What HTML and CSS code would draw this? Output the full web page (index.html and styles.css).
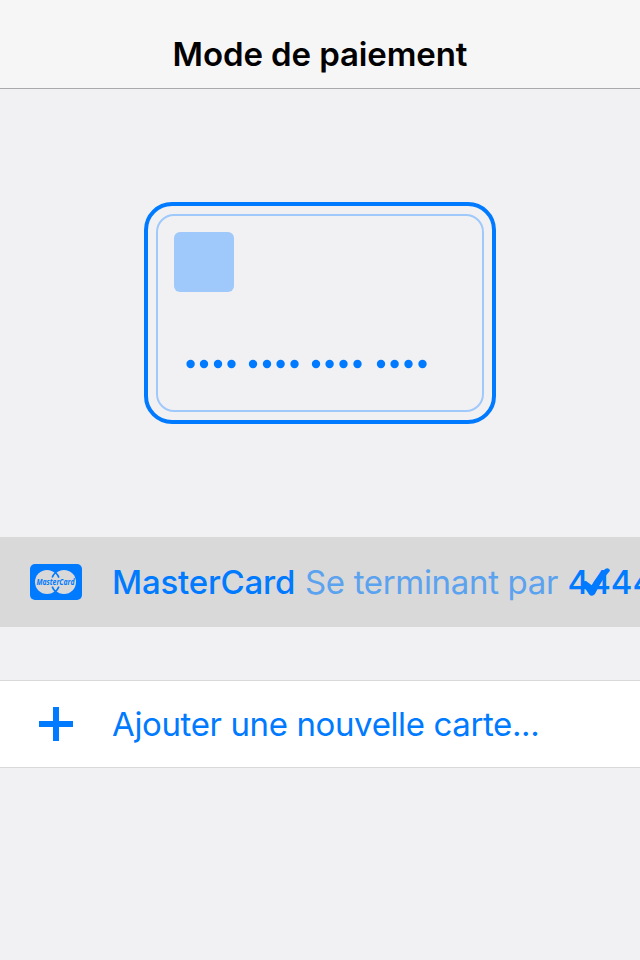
FILE: index.html
```html
<!DOCTYPE html>
<html lang="fr">
<head>
<meta charset="utf-8">
<title>Mode de paiement</title>
<link rel="stylesheet" href="styles.css">
</head>
<body>
<header class="navbar"><h1 class="title">Mode de paiement</h1></header>
<main>
  <section class="hero">
    <svg class="card" width="352" height="222" viewBox="0 0 352 222" aria-hidden="true">
      <rect class="card-outer" x="2" y="2" width="348" height="218" rx="26"/>
      <rect class="card-inner" x="13" y="13" width="326" height="196" rx="17"/>
      <rect class="chip" x="30" y="30" width="60" height="60" rx="6"/>
      <g class="dots">
        <circle cx="46.6" cy="162" r="4.2"/><circle cx="60" cy="162" r="4.2"/><circle cx="74" cy="162" r="4.2"/><circle cx="87.5" cy="162" r="4.2"/>
        <circle cx="109" cy="162" r="4.2"/><circle cx="123" cy="162" r="4.2"/><circle cx="136.6" cy="162" r="4.2"/><circle cx="150.5" cy="162" r="4.2"/>
        <circle cx="172" cy="162" r="4.2"/><circle cx="185.6" cy="162" r="4.2"/><circle cx="199.5" cy="162" r="4.2"/><circle cx="213.5" cy="162" r="4.2"/>
        <circle cx="237" cy="162" r="4.2"/><circle cx="250.6" cy="162" r="4.2"/><circle cx="264.5" cy="162" r="4.2"/><circle cx="278.5" cy="162" r="4.2"/>
      </g>
    </svg>
  </section>
  <section class="row selected">
    <svg class="icon" width="52" height="36" viewBox="0 0 52 36" aria-hidden="true">
      <rect class="fill" width="52" height="36" rx="5"/>
      <circle class="disc" cx="17" cy="18" r="12"/>
      <circle class="disc" cx="34" cy="18" r="12"/>
      <path class="seam" d="M22.2 13.6Q23.2 10.7 25.5 8.5Q27.8 10.7 28.9 13.6M22.2 22.6Q23.2 25.3 25.5 27.5Q27.8 25.3 28.9 22.6"/>
      <text class="brand" x="6.5" y="20.8" textLength="38" lengthAdjust="spacingAndGlyphs">MasterCard</text>
    </svg>
    <p class="label"><span class="name">MasterCard</span><span class="ending">Se terminant par</span><span class="digits">4444</span></p>
    <svg class="check" width="30" height="30" viewBox="0 0 30 30" aria-hidden="true">
      <path d="M5 14L10.8 18.2Q16 8.500 24.500 1.700Q28.500 0.200 29 3.800Q20.500 13 14 27Q11 30.500 8 27.300L1.800 18Q1.500 13.500 5 14Z"/>
    </svg>
  </section>
  <section class="row add">
    <svg class="icon" width="52" height="36" viewBox="0 0 52 36" aria-hidden="true">
      <path class="fill" d="M23 1h6v14h14v6H29v14h-6V21H9v-6h14z"/>
    </svg>
    <p class="label new">Ajouter une nouvelle carte...</p>
  </section>
</main>
</body>
</html>
```
FILE: styles.css
```css
* { box-sizing: border-box; }
body {
  margin: 0;
  height: 960px;
  overflow: hidden;
  background: #f1f1f4;
  color: #007aff;
  font-family: Inter, "Liberation Sans", sans-serif;
}
.navbar {
  height: 89px;
  padding-top: 33px;
  background: #f6f6f6;
  border-bottom: 1px solid #a9a9ab;
  text-align: center;
}
.title {
  margin: 0;
  color: #000;
  font-size: 33px;
  font-weight: 600;
  line-height: 42px;
  letter-spacing: -0.1px;
}
.hero {
  height: 448px;
  display: flex;
  justify-content: center;
  padding-top: 113px;
}
.card-outer { fill: none; stroke: #007aff; stroke-width: 4; }
.card-inner { fill: none; stroke: #a0c9fb; stroke-width: 2; }
.chip { fill: #a0c9fb; }
.dots, .fill { fill: #007aff; }
.row {
  display: flex;
  align-items: center;
  position: relative;
  padding-left: 30px;
  overflow: hidden;
}
.selected { height: 90px; background: #d9d9d9; }
.add {
  height: 88px;
  margin-top: 53px;
  background: #fff;
  border-top: 1px solid #d9d9dc;
  border-bottom: 1px solid #d9d9dc;
}
.icon { flex: none; margin-right: 30px; }
.label {
  margin: 0;
  display: flex;
  flex: none;
  font-size: 33px;
  line-height: 42px;
  white-space: nowrap;
}
.name { font-weight: 500; width: 193px; letter-spacing: -0.2px; }
.ending { color: #5ba2ef; width: 262.5px; letter-spacing: -0.33px; }
.digits { font-weight: 500; }
.new { letter-spacing: -0.38px; }
.disc { fill: #d9d9d9; }
.seam { fill: none; stroke: #007aff; stroke-width: 1.6; }
.brand {
  fill: #007aff;
  font: italic 700 8px "Open Sans", sans-serif;
}
.check { position: absolute; right: 29px; top: 30px; }
.check path { fill: #007aff; }
```
